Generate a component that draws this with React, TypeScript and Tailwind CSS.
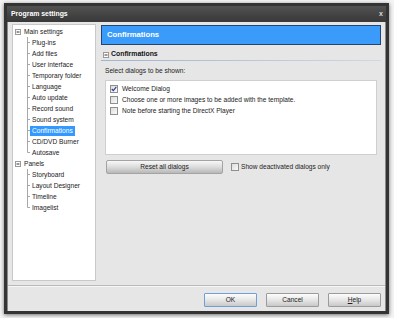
import React from "react";

const font = { fontFamily: '"Liberation Sans", Arial, sans-serif' };

function Conn({ last }: { last?: boolean }) {
  return (
    <svg width="3" height="11" className="shrink-0" viewBox="0 0 3 11">
      <line x1="0.5" y1="0" x2="0.5" y2={last ? 5.5 : 11} stroke="#a8a8a8" strokeWidth="1" />
      <line x1="0.5" y1="5.5" x2="3" y2="5.5" stroke="#a8a8a8" strokeWidth="1" />
    </svg>
  );
}

function Minus() {
  return (
    <svg width="6" height="6" viewBox="0 0 6 6" className="shrink-0">
      <rect x="0.5" y="0.5" width="5" height="5" fill="#fff" stroke="#9a9a9a" />
      <line x1="1.5" y1="3" x2="4.5" y2="3" stroke="#333" />
    </svg>
  );
}

function Check({ checked }: { checked?: boolean }) {
  return (
    <div className="w-[8px] h-[8px] shrink-0 border border-[#8e8f8f] bg-gradient-to-br from-[#dcdcdc] to-[#fafafa] flex items-center justify-center">
      {checked && (
        <svg width="6" height="6" viewBox="0 0 6 6">
          <path d="M0.8 3 L2.3 4.6 L5.3 0.8" fill="none" stroke="#2a3a8c" strokeWidth="1.1" />
        </svg>
      )}
    </div>
  );
}

const mainChildren = [
  "Plug-ins",
  "Add files",
  "User interface",
  "Temporary folder",
  "Language",
  "Auto update",
  "Record sound",
  "Sound system",
  "Confirmations",
  "CD/DVD Burner",
  "Autosave",
];
const panelChildren = ["Storyboard", "Layout Designer", "Timeline", "Imagelist"];

function Btn({ label, def, u }: { label: string; def?: boolean; u?: boolean }) {
  return (
    <div
      className={`w-[53px] h-[14px] flex items-center justify-center rounded-[1px] border text-[6.6px] text-[#222] bg-gradient-to-b from-[#fdfdfd] via-[#e6e6e6] to-[#c9c9c9] ${
        def ? "border-[#6f9fd8]" : "border-[#9b9b9b]"
      }`}
    >
      {u ? (
        <span>
          <span className="underline">H</span>elp
        </span>
      ) : (
        label
      )}
    </div>
  );
}

export default function App() {
  return (
    <div className="w-[394px] h-[318px] bg-[#f4f4f4] pl-[4px] pt-[3px]" style={font}>
      <div className="w-[385px] h-[311px] border-[3px] border-[#343434] bg-[#e6e6e6] flex flex-col shadow-[0_1px_4px_rgba(0,0,0,0.55)]">
        <div className="h-[16px] shrink-0 bg-gradient-to-b from-[#525252] to-[#383838] flex items-center justify-between pl-[4px] pr-[3px]">
          <span className="text-white font-bold text-[6.9px]">Program settings</span>
          <span className="text-[#d8d8d8] font-bold text-[7px]">x</span>
        </div>
        <div className="flex-1 flex flex-col border-l border-r border-[#8a8a8a]">
          <div className="flex gap-[5px] pl-[4px] pr-[4px] pt-[2px]">
            <div className="w-[84px] h-[257px] bg-white border border-[#c9c9c9] pt-[1px] text-[6.6px] text-[#222] leading-[11px]">
              <div className="flex items-center h-[11px] pl-[2px] gap-[3px]">
                <Minus />
                <span>Main settings</span>
              </div>
              {mainChildren.map((c, i) => (
                <div key={c} className="flex items-center h-[11px] pl-[14px]">
                  <Conn last={i === mainChildren.length - 1} />
                  <span
                    className={`px-[2px] h-[10px] leading-[10px] ${
                      c === "Confirmations" ? "bg-[#3399ff] text-white" : ""
                    }`}
                  >
                    {c}
                  </span>
                </div>
              ))}
              <div className="flex items-center h-[11px] pl-[2px] gap-[3px]">
                <Minus />
                <span>Panels</span>
              </div>
              {panelChildren.map((c, i) => (
                <div key={c} className="flex items-center h-[11px] pl-[14px]">
                  <Conn last={i === panelChildren.length - 1} />
                  <span className="px-[2px]">{c}</span>
                </div>
              ))}
            </div>
            <div className="w-[280px] flex flex-col">
              <div className="mt-[1px] h-[20px] border border-[#24456e] bg-[#3b9bfb] flex items-center pl-[5px]">
                <span className="text-white font-bold text-[7.7px]">Confirmations</span>
              </div>
              <div className="mt-[4px] h-[11px] flex items-center gap-[2px] pl-[2px]">
                <Minus />
                <span className="font-bold text-[6.9px] text-[#111]">Confirmations</span>
              </div>
              <div className="h-[1px] bg-gradient-to-r from-[#9fb4cf] to-[#cfd8e4]" />
              <div className="mt-[5px] pl-[4px] text-[6.6px] text-[#222] h-[9px] leading-[9px]">
                Select dialogs to be shown:
              </div>
              <div className="mt-[5px] ml-[4px] w-[272px] h-[75px] bg-white border border-[#cfcfcf] pt-[2px] pl-[4px] text-[6.6px] text-[#222]">
                {[
                  ["Welcome Dialog", true],
                  ["Choose one or more images to be added with the template.", false],
                  ["Note before starting the DirectX Player", false],
                ].map(([t, ch]) => (
                  <div key={t as string} className="flex items-center h-[11px] gap-[4px]">
                    <Check checked={ch as boolean} />
                    <span>{t as string}</span>
                  </div>
                ))}
              </div>
              <div className="mt-[5px] ml-[5px] flex items-center gap-[8px]">
                <div className="w-[117px] h-[14px] rounded-[2px] border border-[#a3a3a3] bg-gradient-to-b from-[#f8f8f8] via-[#dcdcdc] to-[#b8b8b8] flex items-center justify-center text-[6.6px] text-[#222]">
                  Reset all dialogs
                </div>
                <div className="flex items-center gap-[2px] text-[6.6px] text-[#222]">
                  <Check />
                  <span>Show deactivated dialogs only</span>
                </div>
              </div>
            </div>
          </div>
          <div className="mt-[4px] h-[1px] bg-[#b9b9b9]" />
          <div className="h-[1px] bg-[#f6f6f6]" />
          <div className="flex justify-end gap-[9px] pr-[4px] pt-[6px]">
            <Btn label="OK" def />
            <Btn label="Cancel" />
            <Btn label="Help" u />
          </div>
        </div>
      </div>
    </div>
  );
}
